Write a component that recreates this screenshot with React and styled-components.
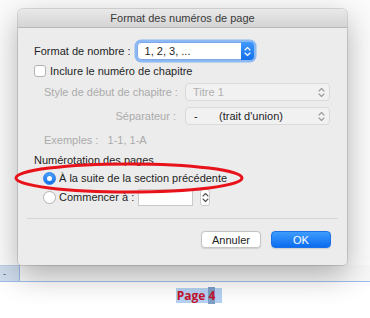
import React from "react";
import styled, { createGlobalStyle } from "styled-components";

const Global = createGlobalStyle`
  html, body { margin: 0; padding: 0; background: #ffffff; }
  body { font-family: "Liberation Sans", Arial, sans-serif; font-size: 11px; color: #1f1f1f; }
`;

const Screen = styled.div`
  position: relative;
  width: 370px;
  height: 318px;
  overflow: hidden;
  background: #fbfbfb;
  padding-top: 9px;
  box-sizing: border-box;
`;

const Dialog = styled.div`
  position: relative;
  z-index: 2;
  margin-left: 18px;
  width: 329px;
  height: 256px;
  background: #ececec;
  border-radius: 5px 5px 4px 4px;
  box-shadow: 0 0 0 1px rgba(0,0,0,0.12), 0 10px 30px rgba(0,0,0,0.3);
  display: flex;
  flex-direction: column;
  overflow: hidden;
`;

const TitleBar = styled.div`
  height: 18px;
  flex: none;
  background: linear-gradient(#e9e9e9, #d4d4d4);
  border-bottom: 1px solid #b9b9b9;
  display: flex;
  align-items: center;
  justify-content: center;
  font-size: 11px;
  color: #3a3a3a;
`;

const Body = styled.div`
  flex: 1;
  display: flex;
  flex-direction: column;
  padding: 14px 16px 0 16px;
`;

const Row = styled.div`
  display: flex;
  align-items: center;
  height: ${p => p.$h || 18}px;
  margin-top: ${p => p.$mt || 0}px;
  padding-left: ${p => p.$indent || 0}px;
`;

const Label = styled.span`
  color: ${p => (p.$disabled ? "#ababab" : "#1f1f1f")};
  width: ${p => (p.$w ? p.$w + "px" : "auto")};
  text-align: ${p => (p.$right ? "right" : "left")};
  white-space: pre;
  flex: none;
`;

const Popup = styled.div`
  position: relative;
  box-sizing: border-box;
  width: ${p => p.$w}px;
  height: 18px;
  margin-left: ${p => p.$ml || 0}px;
  display: flex;
  align-items: center;
  padding-left: ${p => p.$pl || 7}px;
  border-radius: 4px;
  background: ${p => (p.$disabled ? "#f1f1f1" : "#ffffff")};
  border: 1px solid ${p => (p.$disabled ? "#dadada" : "#7fa9e6")};
  box-shadow: ${p => (p.$focus ? "0 0 0 2.5px #8cb8f4" : "none")};
  color: ${p => (p.$dim ? "#b0b0b0" : "#1f1f1f")};
  white-space: pre;
`;

const StepperBlue = styled.div`
  position: absolute;
  right: -1px;
  top: -1px;
  bottom: -1px;
  width: 13px;
  border-radius: 0 4px 4px 0;
  background: linear-gradient(#3f99fb, #1570ea);
  display: flex;
  align-items: center;
  justify-content: center;
`;

const StepperPlain = styled.div`
  position: absolute;
  right: 4px;
  top: 0;
  bottom: 0;
  display: flex;
  align-items: center;
`;

const Chevrons = ({ color }) => (
  <svg width="7" height="11" viewBox="0 0 7 11">
    <path d="M1 4 L3.5 1.5 L6 4 M1 7 L3.5 9.5 L6 7" fill="none" stroke={color} strokeWidth="1.1" strokeLinecap="round" strokeLinejoin="round" />
  </svg>
);

const Check = styled.span`
  width: 12px;
  height: 12px;
  box-sizing: border-box;
  border: 1px solid #b3b3b3;
  border-radius: 3px;
  background: #fff;
  margin-right: 4px;
  flex: none;
`;

const Radio = styled.span`
  width: 13px;
  height: 13px;
  box-sizing: border-box;
  border-radius: 50%;
  flex: none;
  margin-right: 3px;
  display: flex;
  align-items: center;
  justify-content: center;
  background: ${p => (p.$on ? "linear-gradient(#4aa0fc, #1470ea)" : "#fff")};
  border: 1px solid ${p => (p.$on ? "#2a7de9" : "#b3b3b3")};
  &::after {
    content: "";
    width: 5px;
    height: 5px;
    border-radius: 50%;
    background: #fff;
    display: ${p => (p.$on ? "block" : "none")};
  }
`;

const TextBox = styled.div`
  width: 55px;
  height: 17px;
  box-sizing: border-box;
  background: #fff;
  border: 1px solid #c9c9c9;
  margin-left: 4px;
  flex: none;
`;

const SmallStepper = styled.div`
  width: 10px;
  height: 17px;
  box-sizing: border-box;
  border: 1px solid #cbcbcb;
  border-radius: 3px;
  background: #fff;
  margin-left: 7px;
  display: flex;
  align-items: center;
  justify-content: center;
`;

const Divider = styled.div`
  height: 1px;
  background: #d6d6d6;
  margin: 12px -7px 0 -7px;
`;

const Buttons = styled.div`
  display: flex;
  justify-content: flex-end;
  gap: 10px;
  margin-top: 12px;
`;

const Button = styled.div`
  width: 60px;
  height: 17px;
  box-sizing: border-box;
  border-radius: 4px;
  display: flex;
  align-items: center;
  justify-content: center;
  font-size: 11px;
  background: ${p => (p.$primary ? "linear-gradient(#3f9cfd, #0c6cef)" : "#ffffff")};
  color: ${p => (p.$primary ? "#ffffff" : "#222")};
  border: 1px solid ${p => (p.$primary ? "#1b72e6" : "#c5c5c5")};
  box-shadow: 0 0.5px 1px rgba(0,0,0,0.12);
`;

const Annotation = styled.svg`
  position: absolute;
  left: 13px;
  top: 160px;
  z-index: 3;
  overflow: visible;
`;

const DocStrip = styled.div`
  position: relative;
  z-index: 1;
  height: 16px;
  border-bottom: 1px solid #9fbdef;
  background: #f7f7f7;
`;

const Tab = styled.div`
  width: 20px;
  height: 100%;
  box-sizing: border-box;
  background: #cfdcec;
  border-right: 1px solid #98b9e8;
  border-top: 1px solid #b9cde6;
  color: #35557d;
  font-size: 9px;
  display: flex;
  align-items: center;
  padding-left: 3px;
`;

const Footer = styled.div`
  background: #ffffff;
  height: 40px;
  display: flex;
  justify-content: center;
  padding-top: 6px;
  padding-left: 28px;
  box-sizing: border-box;
`;

const PageNum = styled.span`
  background: #b6d1f3;
  color: #c4132e;
  font-family: "Open Sans", "Liberation Sans", sans-serif;
  font-weight: 700;
  font-size: 12px;
  line-height: 15px;
  height: 15px;
  padding: 0 7px 0 1px;
`;

const Sel = styled.span`
  background: #7e9ec5;
`;

export default function App() {
  return (
    <>
      <Global />
      <Screen>
        <Dialog>
          <TitleBar>Format des numéros de page</TitleBar>
          <Body>
            <Row>
              <Label>Format de nombre :</Label>
              <Popup $w={117} $ml={6} $focus>
                1, 2, 3, ...
                <StepperBlue>
                  <Chevrons color="#ffffff" />
                </StepperBlue>
              </Popup>
            </Row>
            <Row $mt={4} $h={14}>
              <Check />
              <Label>Inclure le numéro de chapitre</Label>
            </Row>
            <Row $mt={5} $indent={10}>
              <Label $disabled $w={132}>Style de début de chapitre :</Label>
              <Popup $w={145} $ml={9} $disabled $dim>
                Titre 1
                <StepperPlain>
                  <Chevrons color="#9a9a9a" />
                </StepperPlain>
              </Popup>
            </Row>
            <Row $mt={6} $indent={10}>
              <Label $disabled $right $w={132}>Séparateur :</Label>
              <Popup $w={145} $ml={9} $pl={8} $disabled>
                {"-       (trait d'union)"}
                <StepperPlain>
                  <Chevrons color="#9a9a9a" />
                </StepperPlain>
              </Popup>
            </Row>
            <Row $mt={6} $indent={10}>
              <Label $disabled>{"Exemples :   1-1, 1-A"}</Label>
            </Row>
            <Row $mt={2}>
              <Label>Numérotation des pages</Label>
            </Row>
            <Row $indent={9}>
              <Radio $on />
              <Label>À la suite de la section précédente</Label>
            </Row>
            <Row $mt={1} $indent={9}>
              <Radio />
              <Label>Commencer à :</Label>
              <TextBox />
              <SmallStepper>
                <Chevrons color="#555" />
              </SmallStepper>
            </Row>
            <Divider />
            <Buttons>
              <Button>Annuler</Button>
              <Button $primary>OK</Button>
            </Buttons>
          </Body>
        </Dialog>
        <Annotation width="232" height="36" viewBox="0 0 232 36">
          <ellipse cx="116" cy="18" rx="113" ry="14" fill="none" stroke="#e8121b" strokeWidth="3" />
        </Annotation>
        <DocStrip>
          <Tab>-</Tab>
        </DocStrip>
        <Footer>
          <PageNum>
            Page <Sel>4</Sel>
          </PageNum>
        </Footer>
      </Screen>
    </>
  );
}
